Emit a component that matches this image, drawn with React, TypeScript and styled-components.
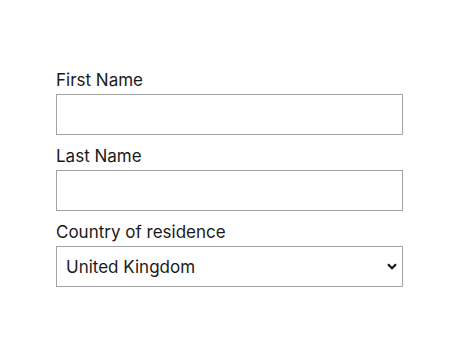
import styled, { createGlobalStyle } from "styled-components";

const GlobalStyle = createGlobalStyle`
  body {
    margin: 0;
    background: #ffffff;
    font-family: Inter, "Noto Sans", sans-serif;
    color: #1a1a1a;
  }
`;

const Form = styled.form`
  width: 347px;
  padding: 69px 0 0 56px;
  display: flex;
  flex-direction: column;
  gap: 10px;
`;

const Field = styled.div`
  display: flex;
  flex-direction: column;
`;

const Label = styled.label`
  font-size: 17px;
  line-height: 22px;
  margin-bottom: 3px;
  color: #1a1a1a;
`;

const Input = styled.input`
  box-sizing: border-box;
  height: 41px;
  width: 100%;
  border: 1px solid #a3a3a3;
  border-radius: 0;
  padding: 0 10px;
  font: inherit;
  font-size: 17px;
  outline: none;
`;

const SelectWrap = styled.div`
  position: relative;
`;

const Select = styled.select`
  box-sizing: border-box;
  height: 41px;
  width: 100%;
  border: 1px solid #a3a3a3;
  border-radius: 0;
  padding: 0 30px 0 9px;
  font: inherit;
  font-size: 17px;
  color: #1a1a1a;
  background: #fff;
  appearance: none;
  outline: none;
`;

const Chevron = styled.svg`
  position: absolute;
  right: 6px;
  top: 17px;
  pointer-events: none;
`;

export default function App() {
  return (
    <>
      <GlobalStyle />
      <Form>
        <Field>
          <Label htmlFor="first">First Name</Label>
          <Input id="first" type="text" />
        </Field>
        <Field>
          <Label htmlFor="last">Last Name</Label>
          <Input id="last" type="text" />
        </Field>
        <Field>
          <Label htmlFor="country">Country of residence</Label>
          <SelectWrap>
            <Select id="country" defaultValue="uk">
              <option value="uk">United Kingdom</option>
              <option value="ie">Ireland</option>
              <option value="us">United States</option>
            </Select>
            <Chevron width="10" height="7" viewBox="0 0 10 7">
              <path d="M1 1.2 L5 5.2 L9 1.2" fill="none" stroke="#111" strokeWidth="2.2" />
            </Chevron>
          </SelectWrap>
        </Field>
      </Form>
    </>
  );
}
